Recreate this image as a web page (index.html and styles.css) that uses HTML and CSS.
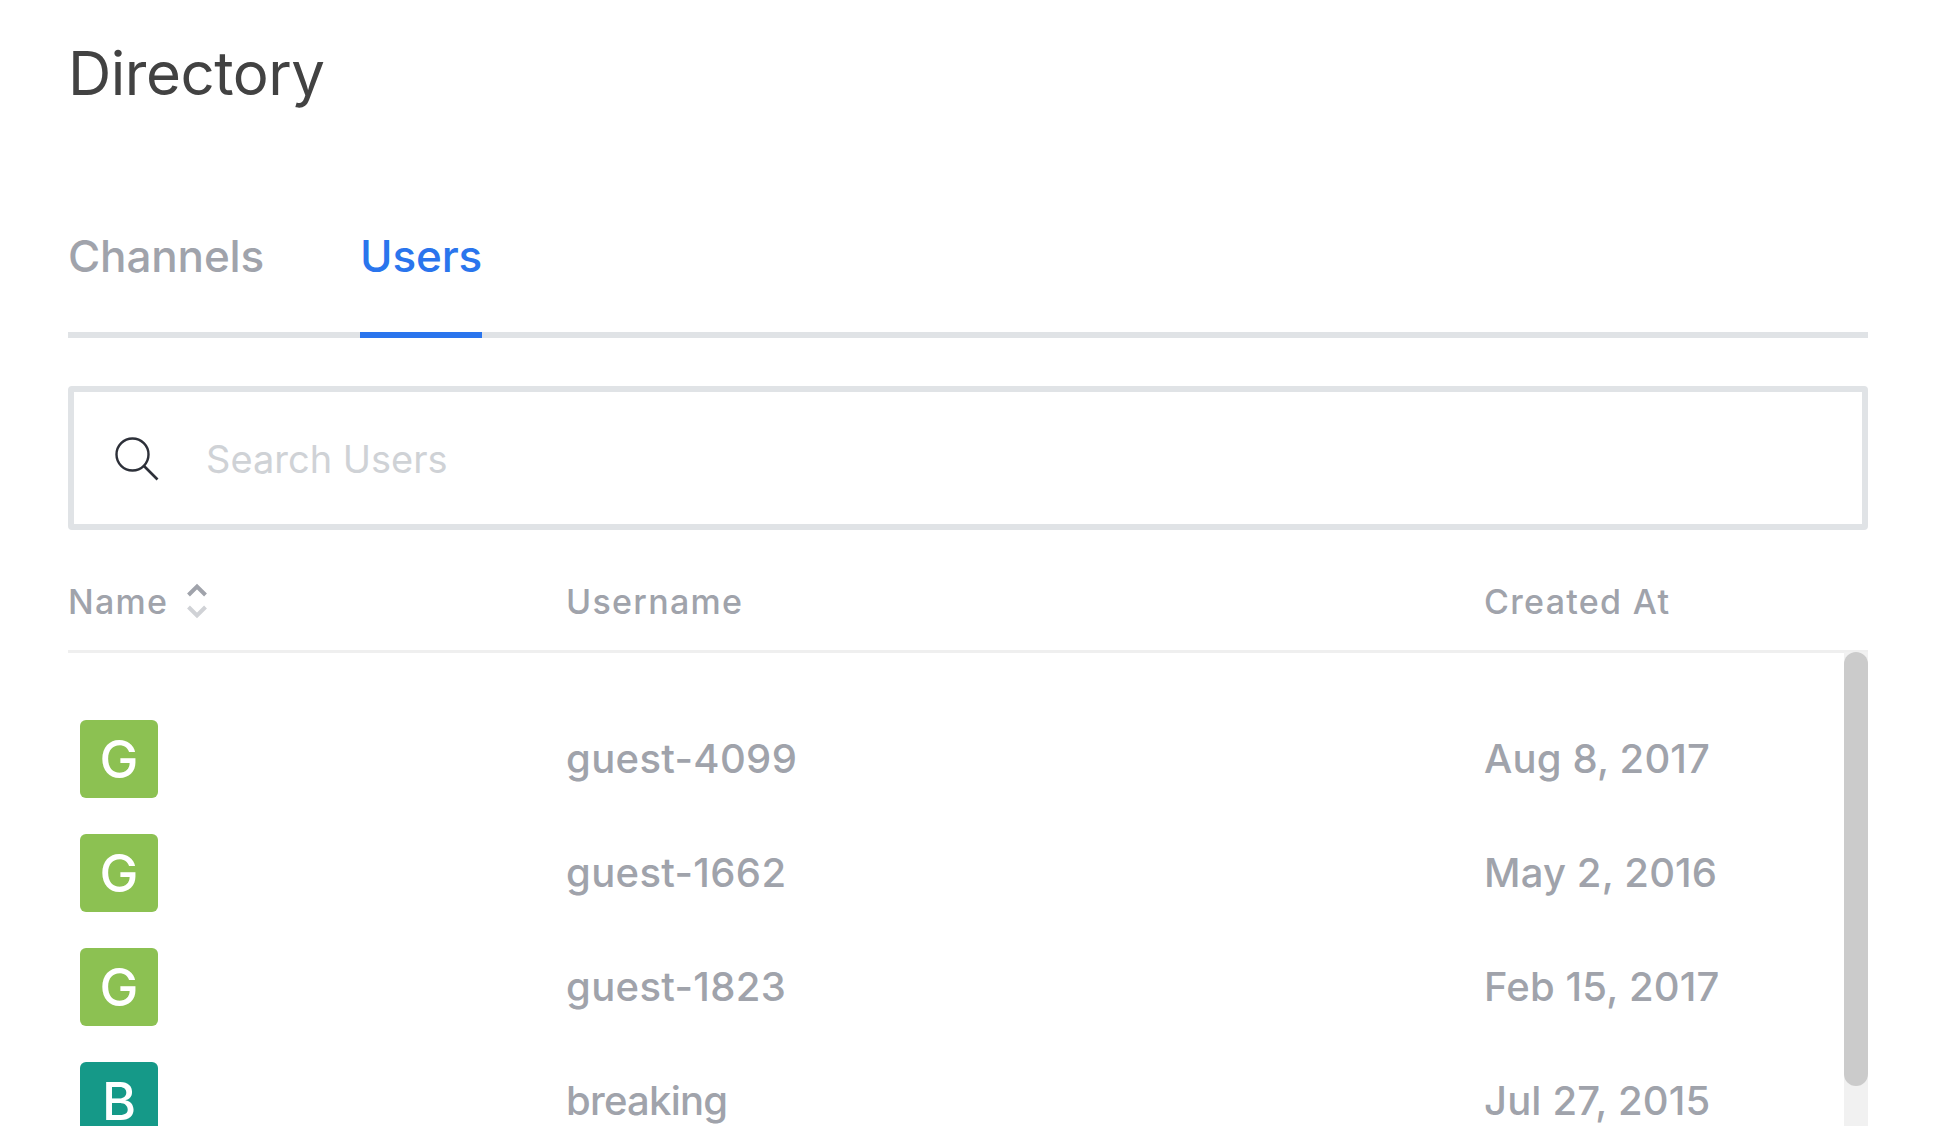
FILE: index.html
```html
<!DOCTYPE html>
<html lang="en">
<head>
<meta charset="utf-8">
<title>Directory</title>
<link rel="stylesheet" href="styles.css">
</head>
<body>
<main class="page">
  <h1 class="title">Directory</h1>
  <nav class="tabs">
    <a class="tab">Channels</a>
    <a class="tab tab-active">Users</a>
  </nav>
  <div class="search">
    <svg class="search-icon" viewBox="0 0 44 44" width="44" height="44" aria-hidden="true">
      <circle cx="17.5" cy="17.5" r="16" fill="none" stroke="#2d3039" stroke-width="2.4"/>
      <path d="M29 29 L42.5 42.500" fill="none" stroke="#2d3039" stroke-width="2.6"/>
    </svg>
    <span class="search-placeholder">Search Users</span>
  </div>
  <div class="table-head cols">
    <div class="head-cell">Name
      <svg class="sort-icon" viewBox="0 0 20 36" width="20" height="36" aria-hidden="true">
        <path d="M1.5 12 L10 3.500 L18.500 12" fill="none" stroke="#a0a3ab" stroke-width="4"/>
        <path d="M1.5 24 L10 32.500 L18.500 24" fill="none" stroke="#d0d2d6" stroke-width="4"/>
      </svg>
    </div>
    <div class="head-cell">Username</div>
    <div class="head-cell">Created At</div>
  </div>
  <div class="table-body">
    <div class="rows">
      <div class="row cols">
        <div class="cell"><span class="avatar avatar-green">G</span></div>
        <div class="cell cell-digits">guest-4099</div>
        <div class="cell cell-date">Aug 8, 2017</div>
      </div>
      <div class="row cols">
        <div class="cell"><span class="avatar avatar-green">G</span></div>
        <div class="cell cell-digits">guest-1662</div>
        <div class="cell cell-date">May 2, 2016</div>
      </div>
      <div class="row cols">
        <div class="cell"><span class="avatar avatar-green">G</span></div>
        <div class="cell cell-digits">guest-1823</div>
        <div class="cell cell-date">Feb 15, 2017</div>
      </div>
      <div class="row cols">
        <div class="cell"><span class="avatar avatar-teal">B</span></div>
        <div class="cell cell-word">breaking</div>
        <div class="cell cell-date">Jul 27, 2015</div>
      </div>
    </div>
    <div class="scroll-track"><div class="scroll-thumb"></div></div>
  </div>
</main>
</body>
</html>
```

FILE: styles.css
```css
* { box-sizing: border-box; }
html, body { margin: 0; height: 100%; overflow: hidden; background: #fff; }
body { font-family: Inter, "Liberation Sans", sans-serif; color: #a0a3ab; }
.page { height: 1126px; padding: 0 78px 0 68px; display: flex; flex-direction: column; }
.title { margin: 0; height: 146px; padding-top: 36px; font-size: 60px; line-height: 74px; font-weight: 400; color: #424242; letter-spacing: -0.5px; }
.tabs { display: flex; gap: 96px; height: 192px; margin-bottom: 48px; border-bottom: 6px solid #e0e3e6; padding-top: 82px; }
.tab { height: 110px; font-size: 44px; line-height: 56px; margin-bottom: -6px; color: #a0a3ab; letter-spacing: -0.15px; font-weight: 450; }
.tab-active { color: #2a75ed; border-bottom: 6px solid #2a75ed; }
.search { height: 144px; border: 6px solid #e0e3e6; border-radius: 4px; display: flex; align-items: center; padding-left: 41px; gap: 47px; }
.search-icon { flex: none; margin-top: 2px; }
.search-placeholder { font-size: 38px; line-height: 50px; margin-top: 2px; color: #cfd2d6; }
.cols { display: grid; grid-template-columns: 498px 918px 1fr; }
.table-head { flex: none; height: 123px; padding-top: 51px; border-bottom: 3px solid #efefef; }
.head-cell { display: flex; align-items: flex-start; gap: 19px; font-size: 34px; line-height: 42px; font-weight: 450; letter-spacing: 1.3px; color: #a0a3ab; }
.sort-icon { flex: none; margin-top: 2px; }
.table-body { flex: 1; min-height: 0; display: flex; }
.rows { flex: 1; overflow: hidden; padding-top: 49px; }
.row { height: 114px; align-items: center; }
.cell { font-size: 40px; line-height: 50px; color: #a0a3ab; font-weight: 450; }
.cell-digits { letter-spacing: 0.35px; }
.cell-word { letter-spacing: -0.75px; }
.cell-date { letter-spacing: 0.15px; }
.avatar { display: flex; align-items: center; justify-content: center; width: 78px; height: 78px; padding-top: 2px; margin-left: 12px; border-radius: 6px; color: #fff; font-size: 52px; font-weight: 500; }
.avatar-green { background: #8cc152; }
.avatar-teal { background: #159988; }
.scroll-track { flex: none; width: 24px; margin-top: -1px; background: #f1f1f1; position: relative; z-index: 1; }
.scroll-thumb { height: 434px; background: #cbcbcb; border-radius: 12px; }
```
